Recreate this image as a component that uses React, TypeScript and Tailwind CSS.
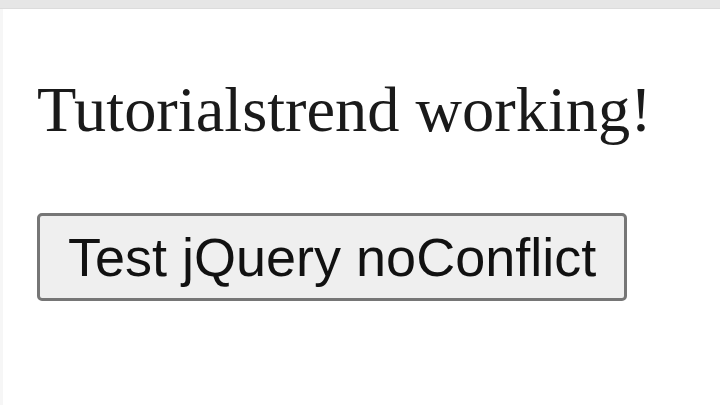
export default function App() {
  return (
    <div className="w-[720px] h-[405px] bg-white overflow-hidden flex flex-col">
      <div className="h-[9px] w-full bg-[#e6e6e6] border-b border-[#dcdcdc]" />
      <div className="flex-1 flex border-l-[3px] border-[#f6f6f6]">
        <div className="pl-[34px] flex flex-col items-start">
          <p
            className="mt-[64px] mb-[66px] text-[64.4px] leading-[1.15] text-[#1a1a1a]"
            style={{ fontFamily: '"Liberation Serif", "Times New Roman", serif' }}
          >
            Tutorialstrend working!
          </p>
          <button
            className="border-[3px] border-[#767676] rounded-[5px] bg-[#efefef] px-[28px] py-[10px] text-[54px] leading-[1.149] text-[#111]"
            style={{ fontFamily: '"Liberation Sans", Arial, sans-serif' }}
          >
            Test jQuery noConflict
          </button>
        </div>
      </div>
    </div>
  );
}
